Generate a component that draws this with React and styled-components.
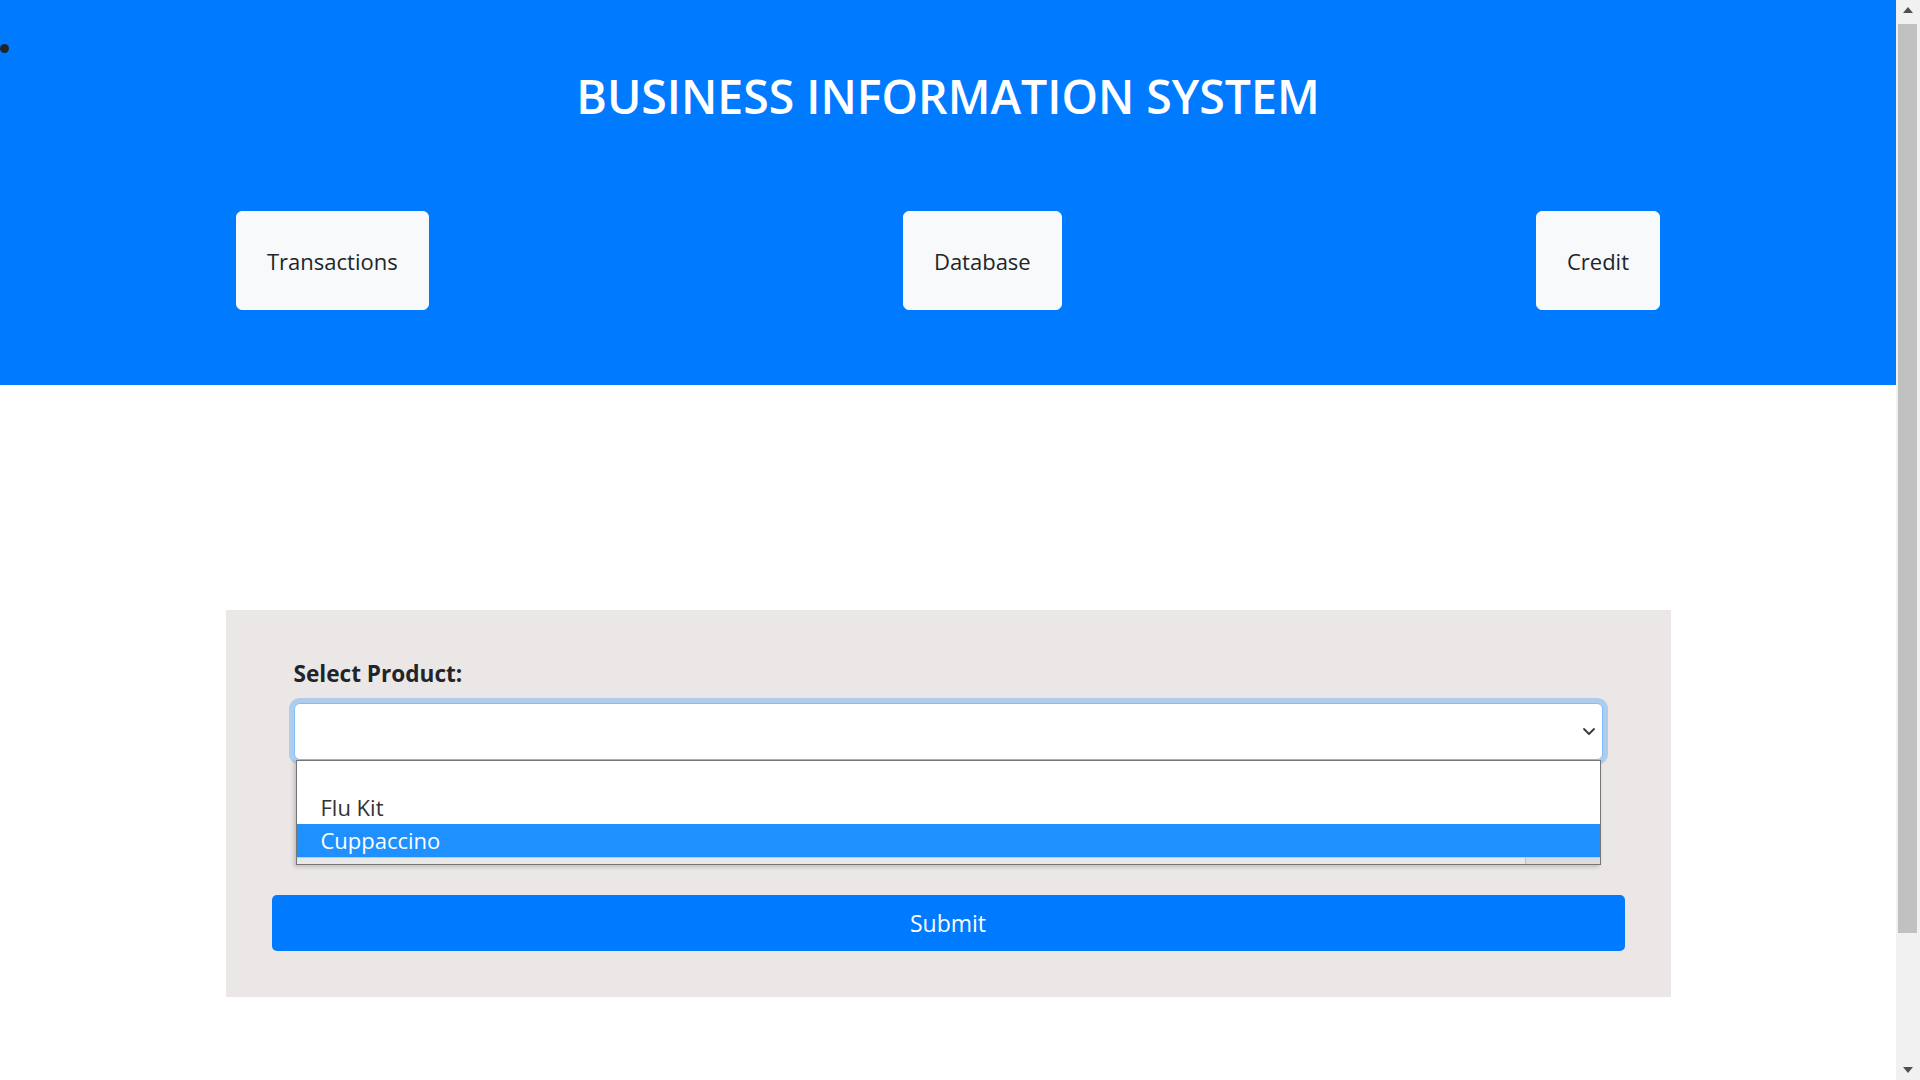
import React from 'react';
import styled, { createGlobalStyle } from 'styled-components';

const GlobalStyle = createGlobalStyle`
  html, body {
    margin: 0;
    padding: 0;
  }
  body {
    font-family: "Open Sans", "Noto Sans", sans-serif;
    background-color: #fff;
    color: #212529;
  }
`;

const Frame = styled.div`
  display: flex;
  height: 100vh;
  overflow: hidden;
`;

const Page = styled.div`
  flex: 1;
  min-width: 0;
  overflow: hidden;
`;

const ScrollBar = styled.div`
  width: 24px;
  flex-shrink: 0;
  display: flex;
  flex-direction: column;
  background-color: #f1f1f1;
`;

const ArrowButton = styled.div`
  height: 20px;
  display: flex;
  align-items: center;
  justify-content: center;
`;

const Track = styled.div`
  flex: 1;
  padding: 4px 3px 0 2px;
`;

const Thumb = styled.div`
  background-color: #c1c1c1;
`;

const Header = styled.header`
  background-color: #007bff;
  padding: 44px 0 75px;
`;

const Dot = styled.span`
  display: block;
  width: 9px;
  height: 9px;
  border-radius: 50%;
  background-color: #212529;
`;

const Title = styled.h1`
  margin: 15px 0 0;
  text-align: center;
  color: #fff;
  font-size: 46.4px;
  font-weight: 600;
  line-height: 56px;
`;

const Nav = styled.nav`
  width: 1424px;
  margin: 87px auto 0;
  display: flex;
  justify-content: space-between;
`;

const NavButton = styled.button`
  height: 99px;
  padding: 0 30px;
  border: 1px solid #f8f9fa;
  border-radius: 6px;
  background-color: #f8f9fa;
  color: #212529;
  font-family: "Open Sans", sans-serif;
  font-size: 22px;
  cursor: pointer;
`;

const Main = styled.main`
  padding: 225px 0 239px;
`;

const Panel = styled.form`
  width: 1445px;
  margin: 0 auto;
  box-sizing: border-box;
  padding: 46px;
  background-color: #ebe7e6;
`;

const Field = styled.div`
  margin: 0 22px;
`;

const Label = styled.label`
  display: block;
  margin-bottom: 12px;
  font-size: 22.6px;
  font-weight: 700;
  line-height: 35px;
  color: #212529;
`;

const SelectWrap = styled.div`
  position: relative;
`;

const SelectBox = styled.div`
  height: 57px;
  box-sizing: border-box;
  border: 1px solid #80bdff;
  border-radius: 6px;
  background-color: #fff;
  box-shadow: 0 0 0 5px rgba(0, 123, 255, 0.25);
  display: flex;
  align-items: center;
  justify-content: flex-end;
  padding: 0 6px;
`;

const Listbox = styled.ul`
  position: absolute;
  top: 57px;
  left: 2px;
  right: 2px;
  margin: 0;
  padding: 0;
  list-style: none;
  background-color: #fff;
  border: 1px solid #767676;
  box-shadow: -2px 2px 4px rgba(0, 0, 0, 0.18);
  z-index: 2;
`;

const Option = styled.li`
  height: ${(p) => (p.$blank ? '30px' : '33px')};
  padding: 0 24px;
  font-size: 22px;
  line-height: 33px;
  color: ${(p) => (p.$active ? '#fff' : '#333')};
  background-color: ${(p) => (p.$active ? '#1e90ff' : '#fff')};
`;

const ListStrip = styled.div`
  display: flex;
  height: 6px;
  background-color: #e8e8e8;
  border-top: 1px solid #c8c8c8;
`;

const StripThumb = styled.span`
  margin-left: auto;
  width: 74px;
  border-left: 1px solid #bdbdbd;
  background-color: #dcdcdc;
`;

const Submit = styled.button`
  display: block;
  width: 100%;
  height: 56px;
  margin-top: 135px;
  border: none;
  border-radius: 5px;
  background-color: #007bff;
  color: #fff;
  font-family: "Open Sans", sans-serif;
  font-size: 23px;
  cursor: pointer;
`;

const Chevron = () => (
  <svg width="14" height="9" viewBox="0 0 14 9" fill="none">
    <polyline points="2,2 7,7 12,2" stroke="#343a40" strokeWidth="1.8" strokeLinecap="round" strokeLinejoin="round" />
  </svg>
);

const Arrow = ({ down }) => (
  <svg width="10" height="6" viewBox="0 0 10 6">
    <polygon points={down ? '0,0 10,0 5,6' : '0,6 10,6 5,0'} fill="#505050" />
  </svg>
);

const links = ['Transactions', 'Database', 'Credit'];
const products = [
  { label: '', blank: true },
  { label: 'Flu Kit' },
  { label: 'Cuppaccino', active: true },
];

const App = () => {
  return (
    <>
      <GlobalStyle />
      <Frame>
        <Page>
          <Header>
            <Dot />
            <Title>BUSINESS INFORMATION SYSTEM</Title>
            <Nav>
              {links.map((l) => (
                <NavButton key={l} type="button">
                  {l}
                </NavButton>
              ))}
            </Nav>
          </Header>
          <Main>
            <Panel onSubmit={(e) => e.preventDefault()}>
              <Field>
                <Label>Select Product:</Label>
                <SelectWrap>
                  <SelectBox>
                    <Chevron />
                  </SelectBox>
                  <Listbox>
                    {products.map((p, i) => (
                      <Option key={i} $blank={p.blank} $active={p.active}>
                        {p.label}
                      </Option>
                    ))}
                    <ListStrip>
                      <StripThumb />
                    </ListStrip>
                  </Listbox>
                </SelectWrap>
              </Field>
              <Submit type="submit">Submit</Submit>
            </Panel>
          </Main>
        </Page>
        <ScrollBar>
          <ArrowButton>
            <Arrow />
          </ArrowButton>
          <Track>
            <Thumb style={{ height: `${(1080 / 1236) * 1040}px` }} />
          </Track>
          <ArrowButton>
            <Arrow down />
          </ArrowButton>
        </ScrollBar>
      </Frame>
    </>
  );
};

export default App;
